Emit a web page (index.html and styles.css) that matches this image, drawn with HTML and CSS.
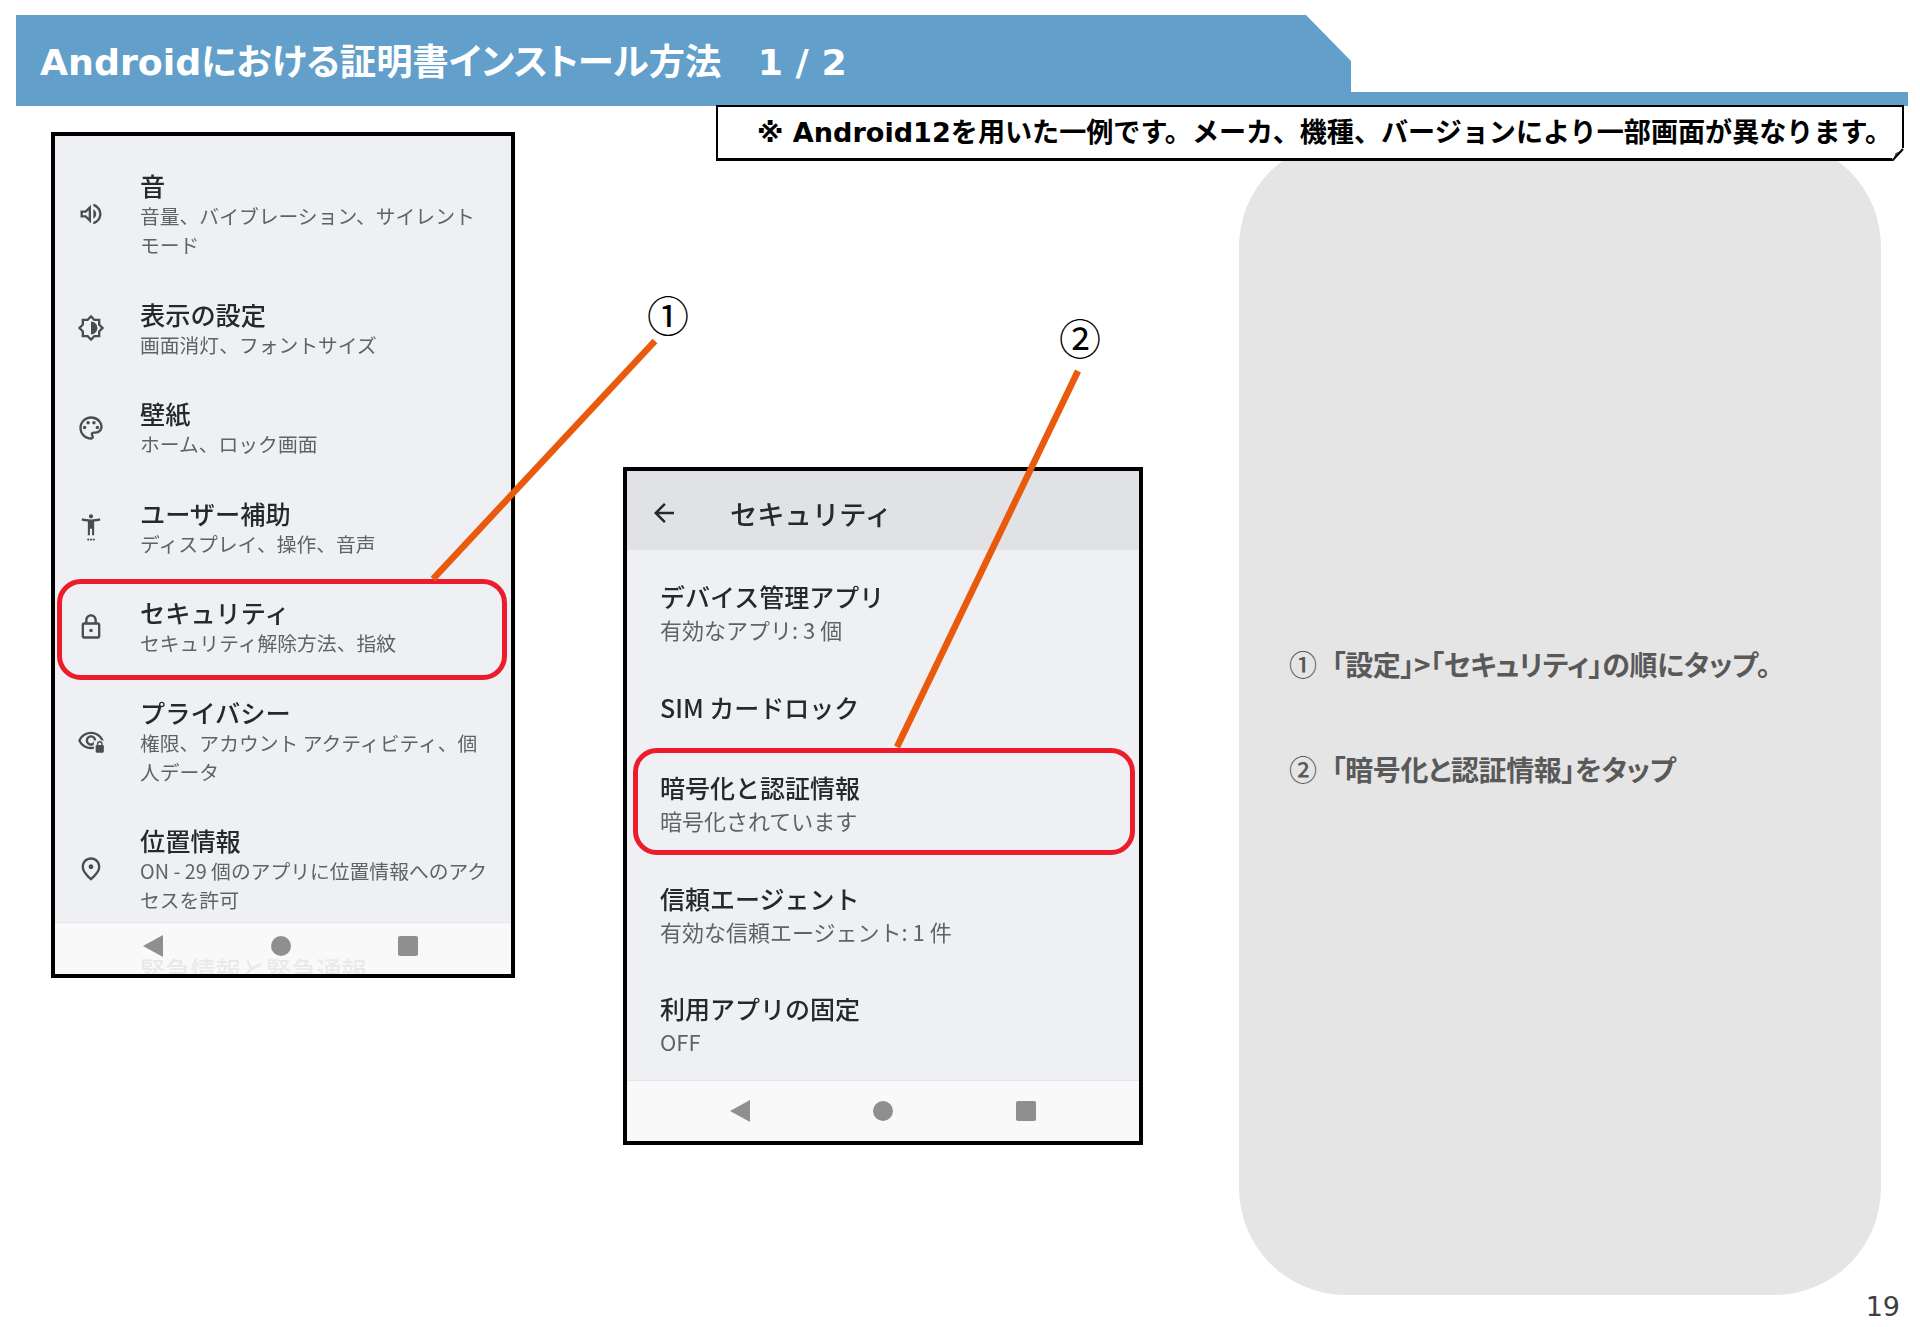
FILE: index.html
```html
<!DOCTYPE html>
<html lang="ja">
<head>
    <meta charset="UTF-8">
    <title>Androidにおける証明書インストール方法</title>
    <link rel="stylesheet" href="styles.css">
</head>
<body>
    <header class="title-band">
        <h1>Androidにおける証明書インストール方法　1 / 2</h1>
    </header>

    <div class="note">
        <p>※ Android12を用いた一例です。メーカ、機種、バージョンにより一部画面が異なります。</p>
        <svg class="note-fold" viewBox="0 0 12 13"><rect width="12" height="13" fill="#FFFFFF"/><path d="M1.5 12 L3.5 5 L10.5 2.5 Z" fill="#555555"/><path d="M0 13 L11 1" fill="none" stroke="#000000" stroke-width="2"/></svg>
    </div>

    <main class="slide-body">
        <!-- Settings list -->
        <section class="phone phone-settings">
            <div class="row">
                <svg class="row-icon" viewBox="0 0 24 24"><path d="M3 9v6h4l5 5V4L7 9H3zm7-.17v6.34L7.83 13H5v-2h2.83L10 8.83zM16.5 12c0-1.77-1.02-3.29-2.5-4.03v8.05c1.48-.73 2.5-2.25 2.5-4.02zM14 3.23v2.06c2.89.86 5 3.54 5 6.71s-2.11 5.85-5 6.71v2.06c4.01-.91 7-4.49 7-8.77 0-4.28-2.99-7.86-7-8.77z"/></svg>
                <div><div class="row-title">音</div><div class="row-sub">音量、バイブレーション、サイレント<br>モード</div></div>
            </div>
            <div class="row">
                <svg class="row-icon" viewBox="0 0 24 24"><path d="M20 15.31L23.31 12 20 8.69V4h-4.69L12 .69 8.69 4H4v4.69L.69 12 4 15.31V20h4.69L12 23.31 15.31 20H20v-4.69zM18 14.48V18h-3.52L12 20.48 9.52 18H6v-3.52L3.52 12 6 9.52V6h3.52L12 3.52 14.48 6H18v3.52L20.48 12 18 14.48zM12 6.5v11c3.03 0 5.5-2.47 5.5-5.5S15.03 6.5 12 6.5z"/></svg>
                <div><div class="row-title">表示の設定</div><div class="row-sub">画面消灯、フォントサイズ</div></div>
            </div>
            <div class="row">
                <svg class="row-icon" viewBox="0 0 24 24"><path d="M12 22C6.49 22 2 17.51 2 12S6.49 2 12 2s10 4.04 10 9c0 3.31-2.69 6-6 6h-1.77c-.28 0-.5.22-.5.5 0 .12.05.23.13.33.41.47.64 1.06.64 1.67 0 1.38-1.12 2.5-2.5 2.5zm0-18c-4.41 0-8 3.59-8 8s3.59 8 8 8c.28 0 .5-.22.5-.5 0-.16-.08-.28-.14-.35-.41-.46-.63-1.05-.63-1.65 0-1.38 1.12-2.5 2.5-2.5H16c2.21 0 4-1.79 4-4 0-3.86-3.59-7-8-7z"/><circle cx="6.5" cy="11.5" r="1.5"/><circle cx="9.5" cy="7.5" r="1.5"/><circle cx="14.5" cy="7.5" r="1.5"/><circle cx="17.5" cy="11.5" r="1.5"/></svg>
                <div><div class="row-title">壁紙</div><div class="row-sub">ホーム、ロック画面</div></div>
            </div>
            <div class="row">
                <svg class="row-icon" viewBox="0 0 24 24"><path transform="translate(1.2 -.8) scale(.9)" d="M20.5 6c-2.61.7-5.67 1-8.5 1s-5.89-.3-8.5-1L3 8c1.86.5 4 .83 6 1v13h2v-6h2v6h2V9c2-.17 4.14-.5 6-1l-.5-2zM12 6c1.1 0 2-.9 2-2s-.9-2-2-2-2 .9-2 2 .9 2 2 2z"/><circle cx="9.6" cy="22.8" r=".9"/><circle cx="12" cy="22.8" r=".9"/><circle cx="14.4" cy="22.8" r=".9"/></svg>
                <div><div class="row-title">ユーザー補助</div><div class="row-sub">ディスプレイ、操作、音声</div></div>
            </div>
            <div class="row">
                <svg class="row-icon" viewBox="0 0 24 24"><path d="M18 8h-1V6c0-2.76-2.24-5-5-5S7 3.24 7 6v2H6c-1.1 0-2 .9-2 2v10c0 1.1.9 2 2 2h12c1.1 0 2-.9 2-2V10c0-1.1-.9-2-2-2zM9 6c0-1.66 1.34-3 3-3s3 1.34 3 3v2H9V6zm9 14H6V10h12v10zm-6-3.5c.83 0 1.5-.67 1.5-1.5s-.67-1.5-1.5-1.5-1.5.67-1.5 1.5.67 1.5 1.5 1.5z"/></svg>
                <div><div class="row-title">セキュリティ</div><div class="row-sub">セキュリティ解除方法、指紋</div></div>
            </div>
            <div class="row">
                <svg class="row-icon" viewBox="0 0 24 24"><path d="M12 6c3.79 0 7.17 2.13 8.82 5.5C19.17 14.87 15.79 17 12 17s-7.17-2.13-8.82-5.5C4.83 8.13 8.21 6 12 6m0-2C7 4 2.73 7.11 1 11.5 2.73 15.89 7 19 12 19s9.27-3.11 11-7.5C21.27 7.11 17 4 12 4zm0 5c1.38 0 2.5 1.12 2.5 2.5S13.38 14 12 14s-2.5-1.12-2.5-2.5S10.62 9 12 9m0-2c-2.48 0-4.5 2.02-4.5 4.5S9.52 16 12 16s4.5-2.02 4.5-4.5S14.48 7 12 7z"/><rect class="icon-gap" x="14.5" y="11.5" width="9.5" height="11.5"/><rect x="16" y="15.5" width="7" height="6.5" rx="1"/><path class="icon-line" d="M17.6 15.5v-1a1.9 1.9 0 0 1 3.8 0v1"/></svg>
                <div><div class="row-title">プライバシー</div><div class="row-sub">権限、アカウント アクティビティ、個<br>人データ</div></div>
            </div>
            <div class="row">
                <svg class="row-icon" viewBox="0 0 24 24"><path d="M12 12c-1.1 0-2-.9-2-2s.9-2 2-2 2 .9 2 2-.9 2-2 2zm6-1.8C18 6.57 15.35 4 12 4s-6 2.57-6 6.2c0 2.34 1.95 5.44 6 9.14 4.05-3.7 6-6.8 6-9.14zM12 2c4.2 0 8 3.22 8 8.2 0 3.32-2.67 7.25-8 11.8-5.33-4.55-8-8.48-8-11.8C4 5.22 7.8 2 12 2z"/></svg>
                <div><div class="row-title">位置情報</div><div class="row-sub">ON - 29 個のアプリに位置情報へのアク<br>セスを許可</div></div>
            </div>
            <div class="row">
                <span class="row-icon"></span>
                <div><div class="row-title">緊急情報と緊急通報</div></div>
            </div>
            <div class="nav-bar">
                <span class="nav-back"></span><span class="nav-home"></span><span class="nav-recent"></span>
            </div>
            <div class="highlight"></div>
        </section>

        <!-- Security screen -->
        <section class="phone phone-security">
            <div class="app-bar">
                <svg class="back-arrow" viewBox="0 0 24 24"><path d="M20 11H7.83l5.59-5.59L12 4l-8 8 8 8 1.41-1.41L7.83 13H20v-2z"/></svg>
                <span>セキュリティ</span>
            </div>
            <div class="item"><div class="item-title">デバイス管理アプリ</div><div class="item-sub">有効なアプリ: 3 個</div></div>
            <div class="item item-single"><div class="item-title">SIM カードロック</div></div>
            <div class="item"><div class="item-title">暗号化と認証情報</div><div class="item-sub">暗号化されています</div></div>
            <div class="item"><div class="item-title">信頼エージェント</div><div class="item-sub">有効な信頼エージェント: 1 件</div></div>
            <div class="item"><div class="item-title">利用アプリの固定</div><div class="item-sub">OFF</div></div>
            <div class="nav-bar">
                <span class="nav-back"></span><span class="nav-home"></span><span class="nav-recent"></span>
            </div>
            <div class="highlight"></div>
        </section>

        <!-- Steps -->
        <aside class="steps">
            <p><span class="step-num">①</span>「設定」&gt;「セキュリティ」の順にタップ。</p>
            <p><span class="step-num">②</span>「暗号化と認証情報」をタップ</p>
        </aside>
    </main>

    <footer class="page-number">19</footer>

    <!-- Callouts over the phones -->
    <svg class="callout-lines" viewBox="0 0 1920 1327">
        <line x1="433" y1="579" x2="655" y2="341"/>
        <line x1="897" y1="747" x2="1078" y2="371"/>
    </svg>
    <span class="callout-num callout-one">①</span>
    <span class="callout-num callout-two">②</span>
</body>
</html>
```

FILE: styles.css
```css
html, body {
    margin: 0;
    height: 1327px;
    overflow: hidden;
    background-color: #FFFFFF;
}

body {
    position: relative;
    font-family: "Noto Sans CJK JP", sans-serif;
}

/* Header band with the cut corner */
.title-band {
    width: 1892px;
    height: 91px;
    margin: 15px 0 0 16px;
    background-color: #629FCB;
    clip-path: polygon(0 0, 1290px 0, 1335px 46px, 1335px 77px, 100% 77px, 100% 100%, 0 100%);
}

.title-band h1 {
    margin: 0;
    padding-left: 24px;
    font-family: "DejaVu Sans", "Noto Sans CJK JP", sans-serif;
    font-size: 36.3px;
    font-weight: 700;
    font-feature-settings: "palt";
    line-height: 95px;
    color: #FFFFFF;
    white-space: nowrap;
}

.note {
    position: absolute;
    top: 105px;
    left: 716px;
    z-index: 2;
    box-sizing: border-box;
    width: 1188px;
    height: 56px;
    padding-left: 39px;
    border: 2px solid #000000;
    border-bottom-width: 3px;
    background-color: #FFFFFF;
}

.note p {
    margin: 0;
    font-family: "DejaVu Sans", "Noto Sans CJK JP", sans-serif;
    font-size: 27.1px;
    font-weight: 700;
    line-height: 52px;
    color: #000000;
    white-space: nowrap;
}

.note-fold {
    position: absolute;
    right: -2px;
    bottom: -3px;
    width: 12px;
    height: 13px;
}

.slide-body {
    display: flex;
    align-items: flex-start;
    padding: 26px 0 0 51px;
}

.phone {
    position: relative;
    box-sizing: border-box;
    flex: none;
    overflow: hidden;
    border: 4px solid #000000;
    background-color: #EFF0F3;
    filter: blur(0.3px);
}

.phone-settings {
    width: 464px;
    height: 846px;
    padding-top: 14px;
}

.phone-security {
    width: 520px;
    height: 678px;
    margin: 335px 0 0 108px;
}

/* Settings rows */
.row {
    display: flex;
    align-items: center;
    padding: 19.25px 0;
}

.row-icon {
    flex: none;
    width: 28px;
    height: 28px;
    margin: 0 35px 0 22px;
    fill: #4A4C50;
}

.icon-gap {
    fill: #EFF0F3;
}

.icon-line {
    fill: none;
    stroke: #4A4C50;
    stroke-width: 1.2;
}

.row-title {
    font-size: 25.2px;
    font-weight: 500;
    line-height: 32px;
    color: #26282C;
}

.row-sub {
    font-size: 19.8px;
    line-height: 29px;
    color: #5F6368;
}

/* Security screen */
.app-bar {
    box-sizing: border-box;
    display: flex;
    align-items: center;
    height: 79px;
    margin-bottom: 8px;
    padding-top: 5px;
    background-color: #E1E2E5;
    font-size: 27.3px;
    font-weight: 500;
    color: #26282C;
}

.back-arrow {
    width: 30px;
    height: 30px;
    margin: 0 51px 0 22px;
    fill: #26282C;
}

.item {
    padding: 22.25px 0 22.25px 33px;
}

.item-single {
    padding-top: 22px;
    padding-bottom: 26.5px;
}

.item-title {
    font-size: 25px;
    font-weight: 500;
    line-height: 32px;
    color: #26282C;
}

.item-sub {
    font-size: 22px;
    line-height: 34px;
    color: #5F6368;
}

/* Android navigation bar, over the scrolled list */
.nav-bar {
    position: absolute;
    left: 0;
    right: 0;
    bottom: 0;
    box-sizing: border-box;
    display: flex;
    align-items: center;
    border-top: 1px solid #E4E5E7;
    background-color: rgba(250, 250, 251, 0.92);
}

.phone-settings .nav-bar {
    height: 52px;
    padding-left: 88px;
    padding-bottom: 5px;
    gap: 107.5px;
}

.phone-security .nav-bar {
    height: 61px;
    padding-left: 103px;
    gap: 123px;
}

.nav-back {
    width: 0;
    height: 0;
    border-top: 11px solid transparent;
    border-bottom: 11px solid transparent;
    border-right: 20px solid #8E8F91;
}

.nav-home {
    width: 20px;
    height: 20px;
    border-radius: 50%;
    background-color: #8E8F91;
}

.nav-recent {
    width: 20px;
    height: 20px;
    border-radius: 2px;
    background-color: #8E8F91;
}

/* Red rounded highlight */
.highlight {
    position: absolute;
    box-sizing: border-box;
    border: 5.5px solid #EC1C2C;
    border-radius: 24px;
}

.phone-settings .highlight {
    left: 2px;
    top: 443px;
    width: 450px;
    height: 101px;
}

.phone-security .highlight {
    left: 6px;
    top: 277px;
    width: 502px;
    height: 107px;
}

/* Grey text panel */
.steps {
    box-sizing: border-box;
    flex: none;
    display: flex;
    flex-direction: column;
    justify-content: center;
    gap: 65px;
    width: 642px;
    height: 1155px;
    margin: 8px 0 0 96px;
    padding: 0 0 2px 50px;
    border-radius: 107px;
    background-color: #E5E5E5;
}

.steps p {
    margin: 0;
    font-size: 28px;
    font-weight: 700;
    font-feature-settings: "palt";
    letter-spacing: -0.4px;
    line-height: 40px;
    color: #595959;
    white-space: nowrap;
}

.step-num {
    margin-right: 15px;
    font-weight: 500;
}

.page-number {
    padding-right: 20px;
    font-family: "DejaVu Sans", sans-serif;
    font-size: 27px;
    line-height: 24px;
    text-align: right;
    color: #404040;
}

.callout-lines {
    position: absolute;
    top: 0;
    left: 0;
    width: 1920px;
    height: 1327px;
    pointer-events: none;
}

.callout-lines line {
    stroke: #E95A0C;
    stroke-width: 6.5;
}

.callout-num {
    position: absolute;
    width: 60px;
    font-size: 42px;
    line-height: 50px;
    text-align: center;
    color: #000000;
}

.callout-one {
    left: 638px;
    top: 289px;
}

.callout-two {
    left: 1050px;
    top: 312px;
}
```
